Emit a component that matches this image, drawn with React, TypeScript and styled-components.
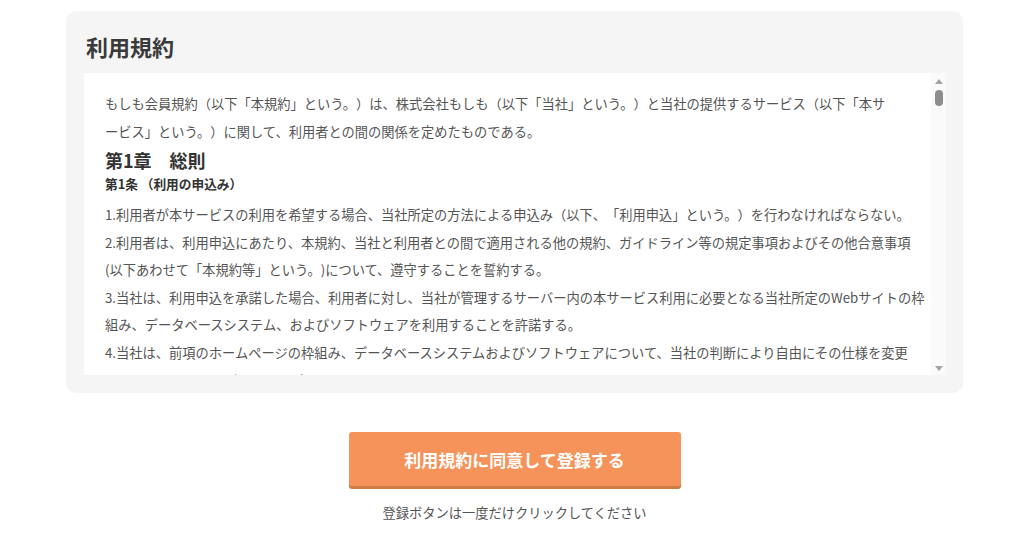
import styled, { createGlobalStyle } from 'styled-components';

const GlobalStyle = createGlobalStyle`
  html, body {
    margin: 0;
    padding: 0;
    background: #ffffff;
  }
  body {
    font-family: 'Noto Sans CJK JP', 'Noto Sans', sans-serif;
    color: #555555;
    text-spacing-trim: space-all;
  }
`;

const articles = [
  '1.利用者が本サービスの利用を希望する場合、当社所定の方法による申込み（以下、「利用申込」という。）を行わなければならない。',
  [
    '2.利用者は、利用申込にあたり、本規約、当社と利用者との間で適用される他の規約、ガイドライン等の規定事項およびその他合意事項',
    '(以下あわせて「本規約等」という。)について、遵守することを誓約する。',
  ],
  [
    '3.当社は、利用申込を承諾した場合、利用者に対し、当社が管理するサーバー内の本サービス利用に必要となる当社所定のWebサイトの枠',
    '組み、データベースシステム、およびソフトウェアを利用することを許諾する。',
  ],
  [
    '4.当社は、前項のホームページの枠組み、データベースシステムおよびソフトウェアについて、当社の判断により自由にその仕様を変更',
    'し、バージョンアップすることができる。',
  ],
];

const App = () => {
  return (
    <>
      <GlobalStyle />
      <Page>
        <TermsCard>
          <CardTitle>利用規約</CardTitle>
          <ScrollBox>
            <TermsText>
              <Lead>
                もしも会員規約（以下「本規約」という。）は、株式会社もしも（以下「当社」という。）と当社の提供するサービス（以下「本サ
                <br />
                ービス」という。）に関して、利用者との間の関係を定めたものである。
              </Lead>
              <Chapter>第1章　総則</Chapter>
              <Article>第1条 （利用の申込み）</Article>
              <Clauses>
                {articles.map((item, i) => (
                  <Clause key={i}>
                    {Array.isArray(item)
                      ? item.map((line, j) => (
                          <span key={j}>
                            {line}
                            {j < item.length - 1 && <br />}
                          </span>
                        ))
                      : item}
                  </Clause>
                ))}
              </Clauses>
            </TermsText>
            <ScrollBar>
              <Arrow dir="up" />
              <Thumb />
              <Track />
              <Arrow dir="down" />
            </ScrollBar>
          </ScrollBox>
        </TermsCard>

        <SubmitArea>
          <SubmitButton type="button">利用規約に同意して登録する</SubmitButton>
          <Note>登録ボタンは一度だけクリックしてください</Note>
        </SubmitArea>
      </Page>
    </>
  );
};

export default App;

const Page = styled.main`
  padding: 11px 61px 0 66px;
`;

const TermsCard = styled.section`
  background-color: #f5f5f5;
  border-radius: 10px;
  padding: 18px 17px 18px 18px;
`;

const CardTitle = styled.h2`
  margin: 0 0 10px 2px;
  font-size: 22px;
  line-height: 34px;
  font-weight: 700;
  color: #3a3a3a;
`;

const ScrollBox = styled.div`
  display: flex;
  height: 302px;
  background-color: #ffffff;
`;

const TermsText = styled.div`
  flex: 1;
  min-width: 0;
  overflow: hidden;
  padding: 17px 0 0 21px;
  font-size: 13.25px;
  color: #555555;
`;

const Lead = styled.p`
  margin: 0;
  line-height: 28px;
`;

const Chapter = styled.h3`
  margin: 0;
  font-size: 18px;
  line-height: 28px;
  font-weight: 700;
  color: #333333;
`;

const Article = styled.h4`
  margin: 0 0 7px;
  font-size: 12.7px;
  line-height: 20px;
  font-weight: 700;
  color: #333333;
`;

const Clauses = styled.div`
  display: flex;
  flex-direction: column;
`;

const Clause = styled.p`
  margin: 0;
  line-height: 27.6px;
  white-space: nowrap;
`;

const ScrollBar = styled.div`
  width: 15px;
  flex-shrink: 0;
  background-color: #fafafa;
  display: flex;
  flex-direction: column;
  align-items: center;
  padding: 6px 0 4px;
  box-sizing: border-box;
`;

const Arrow = styled.span<{ dir: 'up' | 'down' }>`
  width: 0;
  height: 0;
  border-left: 4px solid transparent;
  border-right: 4px solid transparent;
  ${({ dir }) =>
    dir === 'up'
      ? 'border-bottom: 5px solid #a3a3a3;'
      : 'border-top: 5px solid #a3a3a3;'}
`;

const Thumb = styled.span`
  margin-top: 6px;
  width: 8px;
  height: 16px;
  border-radius: 4px;
  background-color: #8d8d8d;
`;

const Track = styled.span`
  flex: 1;
`;

const SubmitArea = styled.div`
  display: flex;
  flex-direction: column;
  align-items: center;
  padding-top: 39px;
`;

const SubmitButton = styled.button`
  width: 332px;
  height: 54px;
  border: none;
  border-radius: 3px;
  background-color: #f5935a;
  box-shadow: 0 3px 0 #cf7a47;
  color: #ffffff;
  font-family: 'Noto Sans CJK JP', 'Noto Sans', sans-serif;
  font-size: 17px;
  font-weight: 700;
  cursor: pointer;
`;

const Note = styled.p`
  margin: 17px 0 0;
  font-size: 13.25px;
  line-height: 20px;
  color: #555555;
`;
